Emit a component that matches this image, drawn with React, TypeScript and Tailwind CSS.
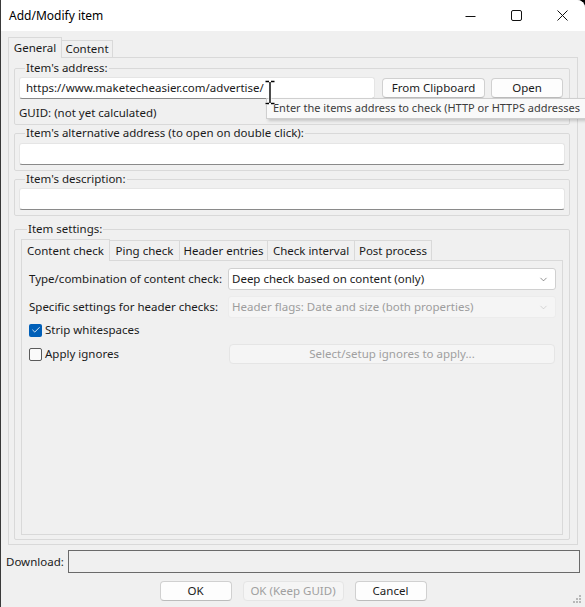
import { ChevronDown, Check } from 'lucide-react'

const font = { fontFamily: '"Noto Sans", "Open Sans", sans-serif' }

function Button({ label, disabled, className = '' }: { label: string; disabled?: boolean; className?: string }) {
  return (
    <div
      className={`h-[20px] flex items-center justify-center rounded-[4px] border leading-none ${
        disabled
          ? 'bg-[#f5f5f5] border-[#e5e5e5] text-[#a0a0a0]'
          : 'bg-[#fdfdfd] border-[#d0d0d0] border-b-[#bcbcbc] text-[#1a1a1a]'
      } ${className}`}
    >
      {label}
    </div>
  )
}

function TextBox({ value, className = '' }: { value?: string; className?: string }) {
  return (
    <div
      className={`h-[22px] bg-white border border-[#e5e5e5] border-b-[#8a8a8a] rounded-[3px] px-[6px] flex items-center text-[#1a1a1a] ${className}`}
    >
      {value}
    </div>
  )
}

function Combo({ value, disabled }: { value: string; disabled?: boolean }) {
  return (
    <div
      className={`w-[328px] h-[22px] rounded-[3px] border flex items-center justify-between pl-[3px] pr-[6px] ${
        disabled
          ? 'bg-[#f5f5f5] border-[#ececec] text-[#9d9d9d]'
          : 'bg-white border-[#d0d0d0] text-[#1a1a1a]'
      }`}
    >
      <span>{value}</span>
      <ChevronDown size={11} strokeWidth={1.4} className={disabled ? 'text-[#c0c0c0]' : 'text-[#555]'} />
    </div>
  )
}

function Group({ label, children, className = '' }: { label: string; children: React.ReactNode; className?: string }) {
  return (
    <fieldset className={`border border-[#d9d9d9] rounded-[2px] ${className}`}>
      <legend className="ml-[6px] px-[1px] leading-[16px] text-[#1a1a1a]">{label}</legend>
      {children}
    </fieldset>
  )
}

const subTabs = [
  { label: 'Ping check', w: 'w-[70px]' },
  { label: 'Header entries', w: 'w-[88px]' },
  { label: 'Check interval', w: 'w-[87px]' },
  { label: 'Post process', w: 'w-[77px]' },
]

export default function App() {
  return (
    <div className="w-[585px] h-[607px] bg-black overflow-hidden text-[11.5px] whitespace-nowrap" style={font}>
      <div className="relative w-full h-full bg-[#f0f0f0] rounded-tr-[8px] border-l border-[#3a3a3a] flex flex-col overflow-hidden">
        {/* title bar */}
        <div className="h-[31px] shrink-0 bg-white flex items-center justify-between">
          <span className="pl-[8px] text-[12px] text-black">Add/Modify item</span>
          <div className="flex h-full">
            <div className="w-[46px] flex items-center justify-center">
              <svg width="11" height="11" viewBox="0 0 11 11">
                <path d="M0.5 6.5h10" stroke="#111" strokeWidth="1" />
              </svg>
            </div>
            <div className="w-[46px] flex items-center justify-center">
              <svg width="11" height="11" viewBox="0 0 11 11">
                <rect x="0.5" y="0.5" width="10" height="10" rx="1.5" fill="none" stroke="#111" strokeWidth="1" />
              </svg>
            </div>
            <div className="w-[46px] flex items-center justify-center">
              <svg width="11" height="11" viewBox="0 0 11 11">
                <path d="M0.5 0.5l10 10M10.5 0.5l-10 10" stroke="#111" strokeWidth="1" />
              </svg>
            </div>
          </div>
        </div>

        {/* body */}
        <div className="flex-1 flex flex-col pt-[6px]">
          <div className="pl-[7px] pr-[7px]">
            {/* tabs */}
            <div className="flex items-end h-[20px]">
              <div className="relative z-10 -mb-px w-[54px] h-[21px] flex items-center justify-center bg-[#f0f0f0] border border-b-0 border-[#d9d9d9] text-[#1a1a1a]">
                General
              </div>
              <div className="w-[51px] h-[17px] flex items-center justify-center border border-l-0 border-b-0 border-[#d9d9d9] text-[#1a1a1a]">
                Content
              </div>
            </div>
            {/* tab page */}
            <div className="h-[488px] border border-[#d9d9d9] pl-[5px] pr-[7px] pt-[2px]">
              <Group label="Item's address:" className="pl-[4px] pr-[5px] pt-[1px] pb-[3px]">
                <div className="flex items-center">
                  <TextBox value="https://www.maketecheasier.com/advertise/" className="w-[356px]" />
                  <Button label="From Clipboard" className="ml-[7px] w-[103px]" />
                  <Button label="Open" className="ml-[6px] w-[72px]" />
                </div>
                <div className="mt-[6px] h-[16px] flex items-center text-[#1a1a1a]">GUID: (not yet calculated)</div>
              </Group>

              <Group label="Item's alternative address (to open on double click):" className="pl-[4px] pr-[4px] pt-[2px] pb-[5px]">
                <TextBox />
              </Group>

              <Group label="Item's description:" className="pl-[4px] pr-[4px] pt-[1px] pb-[5px]">
                <TextBox />
              </Group>

              <Group label="Item settings:" className="mt-[5px] pl-[6px] pr-[6px] pt-[2px] pb-[4px]">
                <div className="flex items-end h-[21px]">
                  <div className="relative z-10 -mb-px w-[89px] h-[22px] flex items-center justify-center bg-[#f0f0f0] border border-b-0 border-[#d9d9d9] text-[#1a1a1a]">
                    Content check
                  </div>
                  {subTabs.map((t) => (
                    <div
                      key={t.label}
                      className={`${t.w} h-[20px] flex items-center justify-center border border-l-0 border-b-0 border-[#d9d9d9] text-[#1a1a1a]`}
                    >
                      {t.label}
                    </div>
                  ))}
                </div>
                <div className="h-[275px] border border-[#d9d9d9] pl-[7px] pr-[5px] pt-[7px] flex flex-col text-[#1a1a1a]">
                  <div className="flex items-center">
                    <span className="w-[199px]">Type/combination of content check:</span>
                    <Combo value="Deep check based on content (only)" />
                  </div>
                  <div className="mt-[6px] flex items-center">
                    <span className="w-[199px]">Specific settings for header checks:</span>
                    <Combo value="Header flags: Date and size (both properties)" disabled />
                  </div>
                  <div className="h-[24px] flex items-center gap-[3px]">
                    <span className="w-[13px] h-[13px] rounded-[2px] bg-[#005fb8] flex items-center justify-center">
                      <Check size={10} strokeWidth={2} className="text-white" />
                    </span>
                    Strip whitespaces
                  </div>
                  <div className="h-[24px] flex items-center">
                    <span className="w-[13px] h-[13px] rounded-[2px] border border-[#5a5a5a] bg-[#fafafa]" />
                    <span className="ml-[3px] w-[184px]">Apply ignores</span>
                    <Button label="Select/setup ignores to apply..." disabled className="w-[326px]" />
                  </div>
                </div>
              </Group>
            </div>
          </div>

          {/* download row */}
          <div className="mt-[5px] flex items-center pl-[5px] pr-[5px]">
            <span className="w-[62px] text-[#1a1a1a]">Download:</span>
            <div className="flex-1 h-[23px] border border-[#6a6a6a] bg-[#f0f0f0]" />
          </div>

          {/* buttons */}
          <div className="mt-[8px] flex justify-center gap-[11px]">
            <Button label="OK" className="w-[72px]" />
            <Button label="OK (Keep GUID)" disabled className="w-[101px]" />
            <Button label="Cancel" className="w-[72px]" />
          </div>
        </div>

        {/* tooltip */}
        <div className="absolute left-[265px] top-[98px] h-[21px] w-[330px] bg-[#f9f9f9] border border-[#cfcfcf] shadow-[2px_2px_3px_rgba(0,0,0,0.18)] pl-[6px] flex items-center text-[11px] text-[#3c3c3c]">
          Enter the items address to check (HTTP or HTTPS addresses
        </div>

        {/* text cursor */}
        <svg className="absolute left-[263px] top-[80px]" width="12" height="25" viewBox="0 0 12 25">
          <path d="M1.5 1.5h3.5M7 1.5h3.5M6 2v21M1.5 23.5h3.5M7 23.5h3.5" stroke="#fff" strokeWidth="3" />
          <path d="M1.5 1.5h3.5M7 1.5h3.5M6 2v21M1.5 23.5h3.5M7 23.5h3.5" stroke="#000" strokeWidth="1.4" />
        </svg>

        {/* size grip */}
        <svg className="absolute right-[3px] bottom-[3px]" width="10" height="10" viewBox="0 0 10 10">
          <rect x="7" y="1" width="2" height="2" fill="#b8b8b8" />
          <rect x="4" y="4" width="2" height="2" fill="#b8b8b8" />
          <rect x="7" y="4" width="2" height="2" fill="#b8b8b8" />
          <rect x="1" y="7" width="2" height="2" fill="#b8b8b8" />
          <rect x="4" y="7" width="2" height="2" fill="#b8b8b8" />
          <rect x="7" y="7" width="2" height="2" fill="#b8b8b8" />
        </svg>
      </div>
    </div>
  )
}
